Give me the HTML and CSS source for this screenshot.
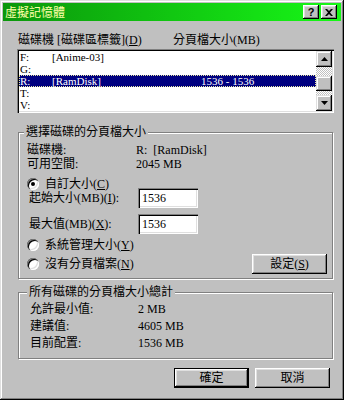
FILE: index.html
```html
<!DOCTYPE html>
<html lang="zh-Hant">
<head>
  <meta charset="UTF-8" />
  <title>虛擬記憶體</title>
  <link rel="stylesheet" href="styles.css">
</head>
<body>
  <div class="window">
    <div class="titlebar">
      <span class="title">虛擬記憶體</span>
      <div class="tbtns">
        <span class="tbtn help">?</span>
        <span class="tbtn">
          <svg width="8" height="7" viewBox="0 0 8 7"><path d="M0 0h2l2 2 2-2h2L5 3.5 8 7H6L4 5 2 7H0l3-3.5z" fill="#000"/></svg>
        </span>
      </div>
    </div>

    <div class="main">
      <div class="list-head">
        <span class="col-drive">磁碟機 [磁碟區標籤](<u>D</u>)</span>
        <span class="col-size">分頁檔大小(MB)</span>
      </div>

      <div class="listbox">
        <div class="rows">
          <div class="row"><span class="c1">F:</span><span class="c2">[Anime-03]</span><span class="c3"></span></div>
          <div class="row"><span class="c1">G:</span><span class="c2"></span><span class="c3"></span></div>
          <div class="row selected"><span class="c1">R:</span><span class="c2">[RamDisk]</span><span class="c3">1536 - 1536</span></div>
          <div class="row"><span class="c1">T:</span><span class="c2"></span><span class="c3"></span></div>
          <div class="row"><span class="c1">V:</span><span class="c2"></span><span class="c3"></span></div>
        </div>
        <div class="vscroll">
          <span class="sbtn"><svg width="7" height="4" viewBox="0 0 7 4"><path d="M3.5 0L7 4H0z" fill="#000"/></svg></span>
          <span class="track"><span class="thumb"></span></span>
          <span class="sbtn"><svg width="7" height="4" viewBox="0 0 7 4"><path d="M0 0h7L3.5 4z" fill="#000"/></svg></span>
        </div>
      </div>

      <fieldset class="group g1">
        <legend>選擇磁碟的分頁檔大小</legend>
        <div class="info"><span class="lbl">磁碟機:</span><span class="val">R:&nbsp;&nbsp;[RamDisk]</span></div>
        <div class="info"><span class="lbl">可用空間:</span><span class="val">2045 MB</span></div>
        <div class="radio-row first"><span class="radio on"></span><span class="rtext">自訂大小(<u>C</u>)</span></div>
        <div class="field"><span class="lbl">起始大小(MB)(<u>I</u>):</span><input class="box" type="text" value="1536"></div>
        <div class="field second"><span class="lbl">最大值(MB)(<u>X</u>):</span><input class="box" type="text" value="1536"></div>
        <div class="radio-row mid"><span class="radio"></span><span class="rtext">系統管理大小(<u>Y</u>)</span></div>
        <div class="radio-row last">
          <span class="radio"></span><span class="rtext">沒有分頁檔案(<u>N</u>)</span>
          <button class="btn set">設定(<u>S</u>)</button>
        </div>
      </fieldset>

      <fieldset class="group g2">
        <legend>所有磁碟的分頁檔大小總計</legend>
        <div class="sum"><span class="lbl">允許最小值:</span><span class="val">2 MB</span></div>
        <div class="sum"><span class="lbl">建議值:</span><span class="val">4605 MB</span></div>
        <div class="sum"><span class="lbl">目前配置:</span><span class="val">1536 MB</span></div>
      </fieldset>

      <div class="actions">
        <button class="btn default">確定</button>
        <button class="btn">取消</button>
      </div>
    </div>
  </div>
</body>
</html>
```

FILE: styles.css
```css
* {
  box-sizing: border-box;
}
body {
  margin: 0;
  background: #c0c0c0;
  font: 12px/14px "Liberation Serif", "Noto Sans CJK TC", serif;
  color: #000;
}
u {
  text-decoration-thickness: 1px;
}
.window {
  width: 344px;
  height: 400px;
  padding: 3px;
  background: #c0c0c0;
  box-shadow: inset -1px -1px #000, inset 1px 1px #dfdfdf,
    inset -2px -2px #808080, inset 2px 2px #fff;
  display: flex;
  flex-direction: column;
}

/* title bar */
.titlebar {
  height: 18px;
  display: flex;
  align-items: center;
  justify-content: space-between;
  padding: 0 4px 0 2px;
  background: linear-gradient(to right, #0b960b, #17f817);
}
.title {
  color: #ffffa8;
  font-family: "Noto Sans CJK TC", sans-serif;
  font-size: 12px;
  line-height: 14px;
}
.tbtns {
  display: flex;
  gap: 2px;
}
.tbtn {
  width: 16px;
  height: 14px;
  display: flex;
  align-items: center;
  justify-content: center;
  background: #c0c0c0;
  box-shadow: inset -1px -1px #000, inset 1px 1px #fff,
    inset -2px -2px #808080, inset 2px 2px #dfdfdf;
}
.tbtn.help {
  font: bold 11px/12px "Liberation Sans", sans-serif;
  padding-bottom: 1px;
}

.main {
  padding: 0 11px 0 14px;
  display: flex;
  flex-direction: column;
}

/* drive list */
.list-head {
  margin-top: 12px;
  height: 14px;
  display: flex;
  padding-left: 1px;
}
.col-drive {
  width: 155px;
}
.listbox {
  margin-top: 2px;
  width: 317px;
  height: 64px;
  padding: 2px;
  display: flex;
  background: #fff;
  box-shadow: inset 1px 1px #808080, inset 2px 2px #000,
    inset -1px -1px #fff, inset -2px -2px #dfdfdf;
}
.rows {
  flex: 1;
}
.row {
  height: 12px;
  font-size: 11px;
  line-height: 12px;
  display: flex;
  padding-left: 1px;
}
.row .c1 {
  width: 32px;
}
.row .c2 {
  width: 149px;
}
.row.selected {
  background: #000080;
  color: #fff;
  outline: 1px dotted #e8e8a0;
  outline-offset: -1px;
}
.vscroll {
  width: 16px;
  display: flex;
  flex-direction: column;
}
.sbtn {
  width: 16px;
  height: 16px;
  display: flex;
  align-items: center;
  justify-content: center;
  background: #c0c0c0;
  box-shadow: inset -1px -1px #000, inset 1px 1px #dfdfdf,
    inset -2px -2px #808080, inset 2px 2px #fff;
}
.track {
  flex: 1;
  background: repeating-conic-gradient(#c0c0c0 0 25%, #fff 0 50%) 0 0 / 2px 2px;
}
.thumb {
  display: block;
  margin-top: 9px;
  height: 15px;
  background: #c0c0c0;
  box-shadow: inset -1px -1px #000, inset 1px 1px #dfdfdf,
    inset -2px -2px #808080, inset 2px 2px #fff;
}

/* group boxes */
.group {
  margin: 13px 0 0 1px;
  width: 315px;
  border: 1px solid #808080;
  box-shadow: inset 1px 1px #fff, 1px 1px #fff;
  min-width: 0;
}
.group legend {
  margin-left: -3px;
  padding: 0 2px;
  line-height: 13px;
  background: #c0c0c0;
}
.g1 {
  padding: 4px 5px 4px 8px;
}
.info {
  display: flex;
  height: 14px;
}
.info .lbl {
  width: 109px;
}
.radio-row {
  display: flex;
  align-items: center;
  gap: 6px;
  height: 12px;
}
.radio-row.first {
  margin-top: 7px;
}
.radio-row.mid {
  margin-top: 5px;
}
.radio-row.last {
  margin-top: 3px;
  height: 20px;
}
.radio {
  width: 12px;
  height: 12px;
  flex: none;
  border-radius: 50%;
  background: #fff;
  box-shadow: inset 1px 1px #808080, inset 2px 2px #000,
    inset -1px -1px #fff, inset -2px -2px #dfdfdf;
  display: flex;
  align-items: center;
  justify-content: center;
}
.radio.on::after {
  content: "";
  width: 4px;
  height: 4px;
  border-radius: 50%;
  background: #000;
}
.field {
  display: flex;
  align-items: center;
  height: 20px;
  padding-left: 2px;
  margin-top: -2px;
}
.field.second {
  margin-top: 6px;
}
.field .lbl {
  width: 109px;
}
.box {
  width: 60px;
  height: 20px;
  border: 0;
  padding: 0 4px;
  font: inherit;
  background: #fff;
  box-shadow: inset 1px 1px #808080, inset 2px 2px #000,
    inset -1px -1px #fff, inset -2px -2px #dfdfdf;
}
.btn {
  width: 75px;
  height: 20px;
  border: 0;
  padding: 0;
  font: 12px/14px "Liberation Serif", "Noto Sans CJK TC", serif;
  color: #000;
  background: #c0c0c0;
  box-shadow: inset -1px -1px #000, inset 1px 1px #fff,
    inset -2px -2px #808080, inset 2px 2px #dfdfdf;
}
.btn.set {
  margin-left: auto;
}
.btn.default {
  border: 1px solid #000;
}
.g2 {
  margin-top: 7px;
  padding: 1px 5px 7px 11px;
}
.sum {
  display: flex;
  height: 17px;
  align-items: center;
}
.sum .lbl {
  width: 108px;
}

/* dialog buttons */
.actions {
  margin-top: 9px;
  display: flex;
  justify-content: flex-end;
  gap: 6px;
}
```
